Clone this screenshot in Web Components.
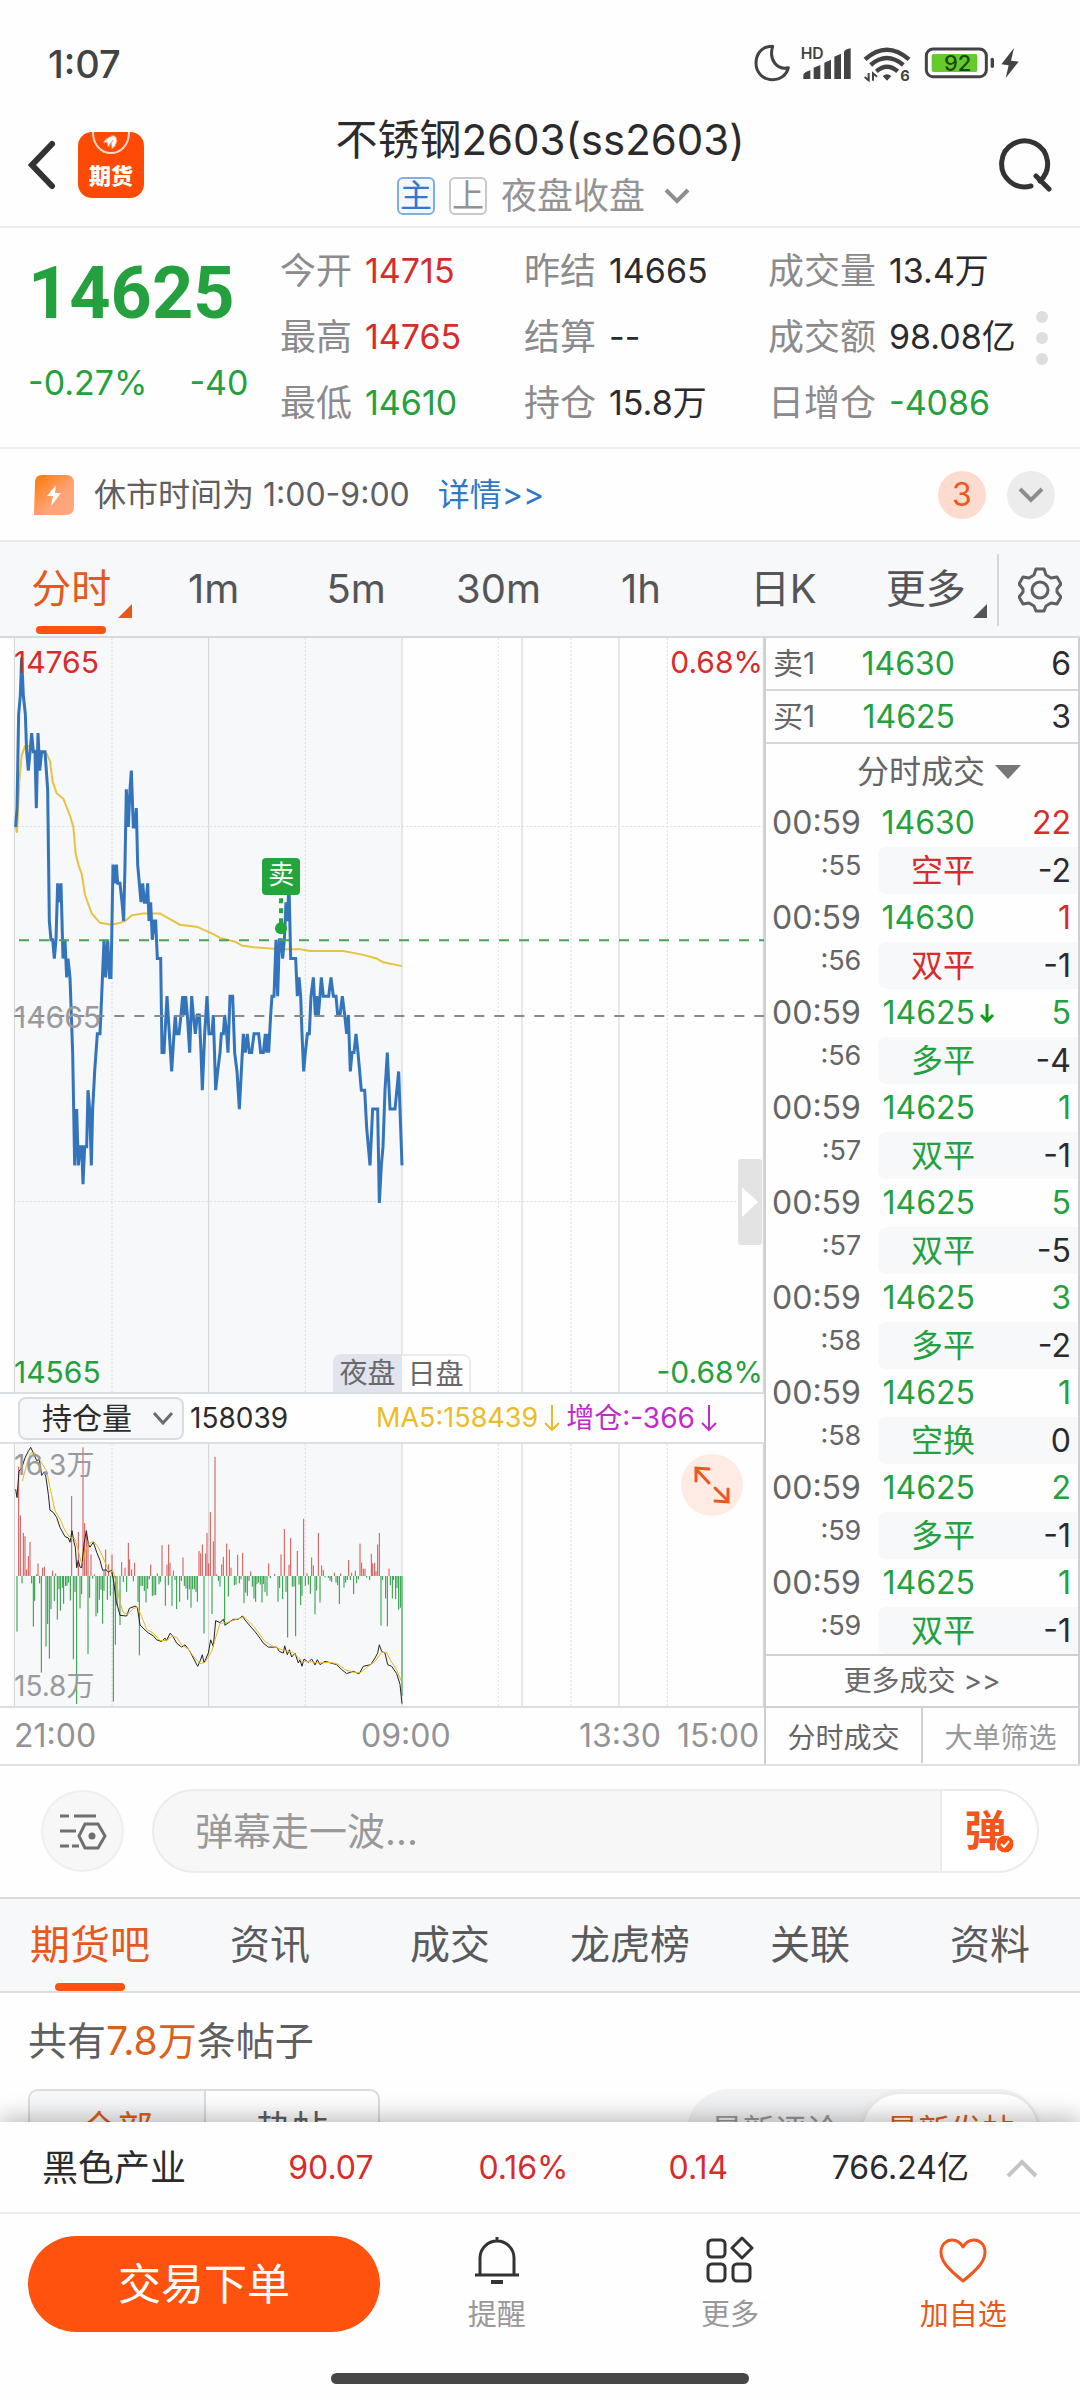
<!DOCTYPE html>
<html lang="zh-CN">
<head>
<meta charset="utf-8">
<meta name="viewport" content="width=device-width, initial-scale=1">
<title>不锈钢2603(ss2603)</title>
<style>
  :root {
    --up: #d82b2b;
    --down: #24a03e;
    --brand: #ff520e;
    --brand-text: #e8571b;
    --ink: #2b2b2d;
    --ink-2: #5f5f61;
    --ink-3: #8b8b8d;
    --line: #dcdcde;
    --panel: #f6f8fa;
  }

  body {
    margin: 0;
    background: #fefefe;
    color: var(--ink);
    font-family: Inter, "Noto Sans CJK SC", sans-serif;
  }
</style>
</head>
<body>

<futures-app>
  <status-bar slot="top"></status-bar>
  <page-header slot="top"></page-header>
  <quote-board></quote-board>
  <notice-bar></notice-bar>
  <period-tabs></period-tabs>
  <market-panel>
    <price-chart></price-chart>
    <position-chart></position-chart>
    <trade-tape slot="side"></trade-tape>
  </market-panel>
  <danmu-bar></danmu-bar>
  <section-tabs></section-tabs>
  <post-panel></post-panel>
  <bottom-dock slot="dock"></bottom-dock>
</futures-app>

<script>
const RESET = `
  :host, *, *::before, *::after { box-sizing: border-box; }
  button, input, select { font: inherit; color: inherit; margin: 0; padding: 0; border: 0; background: none; outline: none; }
  svg { display: block; fill: none; flex: none; }
  a { text-decoration: none; }
`;

function define(name, css, html) {
  customElements.define(name, class extends HTMLElement {
    connectedCallback() {
      if (this.shadowRoot) return;
      const root = this.attachShadow({ mode: "open" });
      const markup = typeof html === "function" ? html() : html;
      root.innerHTML = `<style>${RESET}${css}</style>${markup}`;
    }
  });
}

define("futures-app", `
  :host { display: flex; flex-direction: column; height: 100vh; overflow: hidden; }
  main { flex: 1; min-height: 0; overflow: hidden; }
`, `
  <slot name="top"></slot>
  <main><slot></slot></main>
  <slot name="dock"></slot>
`);

define("status-bar", `
  :host { display: flex; flex: none; align-items: center; justify-content: space-between; padding: 20px 40px 0 48px; height: 108px; }
  time { font-size: 38px; font-weight: 500; line-height: 48px; color: #434343; }
  text { font-family: Inter, sans-serif; fill: #434343; }
`, `
  <time>1:07</time>
  <svg width="300" height="70" viewBox="0 0 900 210">
    <path d="M98 52C60 52 48 80 48 103c0 29 22 49 50 49 24 0 42-14 47-36-32 8-60-22-47-64z" stroke="#434343" stroke-width="9" stroke-linejoin="round"/>
    <text x="182" y="91" font-size="47" font-weight="600">HD</text>
    <path fill="#434343" d="M190 137q2-7 21-13v26h-21zM221 116l20-8v42h-20zM253 101l20-9v58h-20zM283 83l20-9v76h-20zM312 68q4-7 20-10v92h-20z"/>
    <g stroke="#434343" stroke-width="13">
      <path d="M375 91q65-58 132 0M392 108q48-42 98 0M409 127q32-28 64 0"/>
    </g>
    <path d="M428 141q13-10 26 0l-13 14z" fill="#434343"/>
    <path d="M386 132v22l-12-10M399 155v-22l12 10" stroke="#434343" stroke-width="6"/>
    <text x="481" y="155" font-size="44" font-weight="700">6</text>
    <rect x="559" y="60" width="180" height="83" rx="20" stroke="#434343" stroke-width="9"/>
    <rect x="575" y="75" width="137" height="54" rx="6" fill="#66c92c"/>
    <text x="612" y="127" font-size="66" font-weight="500" style="fill:#1d4a08">92</text>
    <path d="M757 91v21" stroke="#434343" stroke-width="10" stroke-linecap="round"/>
    <path d="M822 57l-38 49 22 3-9 38 39-49-23-3z" fill="#434343"/>
  </svg>
`);

define("page-header", `
  :host { display: grid; flex: none; grid-template-columns: 1fr auto 1fr; align-items: center; height: 120px; padding: 4px 28px 8px; border-bottom: 2px solid #ececee; }
  .left { display: flex; align-items: center; gap: 22px; }
  .back, .find { display: flex; }
  .find { justify-self: end; }
  h1 { margin: 0; font-size: 42px; font-weight: 400; line-height: 52px; text-align: center; }
  .state { display: flex; align-items: center; justify-content: center; gap: 14px; margin-top: 10px; padding-left: 8px; height: 40px; font-size: 36px; line-height: 40px; color: #939395; }
  .tag { width: 38px; height: 38px; border: 2px solid #c9c9cb; border-radius: 6px; font-size: 32px; line-height: 33px; text-align: center; }
  .tag.main { border-color: #7fadea; color: #3377cf; background: #f3f8fe; }
  .state button { display: flex; align-items: center; gap: 18px; }
`, `
  <div class="left">
    <button class="back" aria-label="返回">
      <svg width="28" height="50" viewBox="0 0 28 50"><path d="M24 4L4 25l20 21" stroke="#333" stroke-width="6" stroke-linecap="round"/></svg>
    </button>
    <svg width="66" height="66" viewBox="0 0 66 66">
      <rect width="66" height="66" rx="14" fill="#ff4a05"/>
      <path d="M15 0c0 28 36 28 36 0" stroke="#ffd9c8" stroke-width="2"/>
      <path d="M26 9q12-11 13 0-1 5-5 8l-1-6-3 4-1-5-3 1zM35 8l-4 7" fill="#fff" stroke="#ff8a5c" stroke-width="1"/>
      <text x="33" y="52" text-anchor="middle" font-size="22" font-weight="900" fill="#fff" font-family="Noto Sans CJK SC, sans-serif">期货</text>
    </svg>
  </div>
  <div>
    <h1>不锈钢2603(ss2603)</h1>
    <div class="state">
      <span class="tag main">主</span><span class="tag">上</span>
      <button>夜盘收盘<svg width="28" height="20" viewBox="0 0 28 20"><path d="M3 4l11 11L25 4" stroke="#8d8d8f" stroke-width="4"/></svg></button>
    </div>
  </div>
  <button class="find" aria-label="搜索">
    <svg width="54" height="54" viewBox="0 0 54 54"><path d="M33 48A23 23 0 1 1 42 43M38 38l13 13" stroke="#333" stroke-width="5" stroke-linecap="round"/></svg>
  </button>
`);

define("quote-board", `
  :host { display: grid; grid-template-columns: 252fr 244fr 244fr 312fr; position: relative; height: 221px; padding: 10px 0 12px 28px; border-bottom: 2px solid #ececee; }
  .last { display: flex; flex-direction: column; gap: 21px; color: var(--down); }
  .price { margin-top: 18px; font-family: Roboto, sans-serif; font-size: 72px; font-weight: 700; line-height: 76px; }
  .change { display: flex; gap: 42px; font-size: 34px; line-height: 60px; }
  dl { margin: 0; }
  dl div { display: flex; align-items: center; gap: 13px; height: 66px; white-space: nowrap; }
  dt { font-size: 36px; line-height: 44px; color: var(--ink-3); }
  dd { margin: 0; font-size: 34px; line-height: 44px; }
  .up { color: var(--up); }
  .down { color: var(--down); }
  .more { position: absolute; right: 32px; top: 83px; display: grid; gap: 9px; }
  .more i { width: 12px; height: 12px; border-radius: 50%; background: #dedee0; }
`, () => {
  const columns = [
    [["今开", "14715", "up"], ["最高", "14765", "up"], ["最低", "14610", "down"]],
    [["昨结", "14665", ""], ["结算", "--", ""], ["持仓", "15.8万", ""]],
    [["成交量", "13.4万", ""], ["成交额", "98.08亿", ""], ["日增仓", "-4086", "down"]],
  ];
  return `
    <div class="last">
      <div class="price">14625</div>
      <div class="change"><span>-0.27%</span><span>-40</span></div>
    </div>
    ${columns.map(rows => `<dl>${rows.map(([k, v, c]) => `<div><dt>${k}</dt><dd class="${c}">${v}</dd></div>`).join("")}</dl>`).join("")}
    <button class="more" aria-label="更多行情"><i></i><i></i><i></i></button>`;
});

define("notice-bar", `
  :host { display: flex; align-items: center; height: 93px; padding: 0 25px 0 34px; font-size: 32px; line-height: 44px; color: var(--ink-2); border-bottom: 2px solid #e4e7ec; }
  .text { margin-left: 20px; }
  a { margin-left: 28px; color: #2f78c8; }
  .count { margin-left: auto; width: 48px; height: 48px; border-radius: 50%; background: #fddccf; color: #f0561d; line-height: 48px; text-align: center; }
  button { display: grid; place-items: center; width: 48px; height: 48px; margin-left: 21px; border-radius: 50%; background: #ececec; }
`, `
  <svg width="40" height="40" viewBox="0 0 40 40">
    <defs><linearGradient id="g" x1="0" y1="0" x2="1" y2="1"><stop stop-color="#ff7600"/><stop offset=".6" stop-color="#ffa477"/><stop offset="1" stop-color="#ffa880"/></linearGradient></defs>
    <path d="M8 0h24q8 0 8 8v24q0 8-8 8H0l1-32q0-8 7-8z" fill="url(#g)"/>
    <path d="M22 10l-9 11h6l-2 10 10-13h-6z" fill="#fff"/>
  </svg>
  <span class="text">休市时间为 1:00-9:00</span>
  <a href="#detail">详情&gt;&gt;</a>
  <span class="count">3</span>
  <button aria-label="展开"><svg width="28" height="18" viewBox="0 0 28 18"><path d="M3 3l11 11L25 3" stroke="#8d8d8f" stroke-width="4"/></svg></button>
`);

define("period-tabs", `
  :host { display: flex; height: 96px; background: var(--panel); border-bottom: 2px solid #d3d9df; color: #555557; font-size: 40px; }
  nav { display: flex; flex: 1; }
  nav button { position: relative; flex: 1 1 0; text-align: center; white-space: nowrap; line-height: 94px; }
  .on { color: var(--brand-text); }
  .on::before { content: ""; position: absolute; left: 50%; bottom: 2px; width: 70px; height: 8px; margin-left: -35px; border-radius: 4px; background: var(--brand); }
  .menu::after { content: ""; position: absolute; right: 10px; bottom: 18px; border: 7px solid; border-color: transparent currentColor currentColor transparent; }
  .gear { display: grid; place-items: center; width: 83px; margin: 12px 0 10px; border-left: 2px solid #d3d7dd; }
`, `
  <nav>
    <button class="on menu">分时</button><button>1m</button><button>5m</button><button>30m</button>
    <button>1h</button><button>日K</button><button class="menu">更多</button>
  </nav>
  <button class="gear" aria-label="设置">
    <svg width="44" height="46" viewBox="0 0 44 46" stroke="#606062" stroke-width="3" stroke-linejoin="round">
      <path d="M18 2h8l2 6 5 3 6-1 4 7-4 5v3l4 5-4 7-6-1-5 3-2 5h-8l-2-5-5-3-6 1-4-7 4-5v-3l-4-5 4-7 6 1 5-3z"/>
      <circle cx="22" cy="23" r="8"/>
    </svg>
  </button>
`);

define("market-panel", `
  :host { display: grid; grid-template-columns: 764fr 316fr; border-bottom: 2px solid #e0e0e2; }
  .charts { min-width: 0; }
`, `
  <div class="charts"><slot></slot></div>
  <slot name="side"></slot>
`);

// x runs in thirds of a unit over the whole trading day, y is ticks from the previous settlement
const PRICE = [
  47,10, 51,11, 56,16, 61,17, 65,19, 70,17, 76,16, 80,14, 85,13, 90,14, 95,15, 100,14, 105,14, 109,11, 114,15, 119,13, 125,14, 135,14,
  143,12, 148,5, 153,4, 158,4, 163,3, 168,4, 173,7, 177,6, 183,7, 189,3, 195,4, 200,2, 204,3, 210,2, 214,0, 218,-2, 224,-8, 230,-5,
  235,-8, 241,-7, 245,-7, 249,-9, 254,-7, 260,-7, 264,-4, 269,-5, 274,-8, 278,-5, 284,-3, 292,-1, 300,-1, 305,1, 312,4, 317,2, 323,4,
  329,2, 333,2, 339,8, 344,7, 349,8, 353,7, 360,7, 366,6, 371,5, 375,8, 379,12, 385,10, 390,12, 394,13, 400,10, 405,10, 409,11, 413,8,
  418,7, 423,6, 428,7, 433,6, 438,6, 443,7, 447,5, 452,6, 457,4, 463,5, 467,5, 472,3, 482,3, 486,-2, 492,-2, 501,1, 508,-1, 515,-3,
  522,-1, 526,0, 530,-1, 537,-1, 543,0, 548,1, 553,0, 557,1, 562,0, 569,-2, 575,1, 580,0, 586,-1, 592,0, 598,0, 603,-2, 607,-4,
  614,-1, 621,1, 627,-1, 636,-1, 640,0, 647,-4, 653,-3, 660,-2, 664,-1, 670,-1, 674,0, 680,-1, 684,-2, 690,1, 698,1, 704,-2, 711,-3,
  718,-5, 724,-3, 730,-1, 736,-2, 742,-1, 748,-2, 755,-2, 762,-1, 776,-1, 782,-2, 790,-2, 796,-1, 800,-2, 803,-1, 806,-2, 812,0,
  816,1, 822,1, 828,4, 833,1, 838,4, 843,4, 848,3, 853,4, 858,6, 862,5, 867,7, 872,3, 887,3, 892,1, 897,2, 902,1, 906,-1, 911,-3,
  916,-2, 922,-1, 928,-1, 933,1, 940,2, 946,0, 950,1, 955,0, 960,1, 964,2, 970,1, 986,1, 993,2, 1000,1, 1008,1, 1013,0, 1020,0,
  1027,1, 1034,0, 1040,-1, 1045,0, 1051,-3, 1056,-2, 1062,-2, 1068,-1, 1074,-2, 1084,-4, 1094,-4, 1100,-6, 1110,-8, 1118,-5,
  1133,-5, 1138,-10, 1144,-8, 1149,-7, 1155,-4, 1162,-2, 1170,-5, 1185,-5, 1196,-3, 1206,-8,
];
const AVERAGE = [
  47,10, 51,9.7, 58,12.4, 65,13.8, 75,14.3, 90,14.3, 100,14.1, 140,13.9, 150,13.5, 158,12.4, 170,11.8, 190,11.5, 210,10.6, 220,10,
  227,8.6, 235,8, 245,7.5, 255,6.4, 275,5.4, 300,4.9, 335,4.8, 360,4.9, 375,5, 395,5.3, 430,5.4, 480,5.4, 500,5.2, 540,4.8, 590,4.7,
  640,4.3, 660,4.1, 705,3.9, 725,3.7, 760,3.6, 840,3.5, 900,3.5, 930,3.4, 1030,3.4, 1090,3.2, 1130,3, 1150,2.8, 1206,2.6,
];
// position line and its MA5, y down from the top of the pane
const POSITION = [
  47,137, 51,162, 57,82, 65,72, 75,42, 85,22, 92,10, 100,27, 110,50, 118,47, 125,95, 133,84, 138,102, 145,152, 150,200, 160,207,
  170,222, 180,252, 195,280, 205,284, 210,297, 216,262, 222,297, 226,312, 230,374, 235,352, 240,372, 245,374, 252,302, 259,262,
  265,302, 270,312, 280,297, 290,327, 300,352, 308,382, 318,380, 325,387, 335,382, 342,422, 348,472, 360,518, 380,520, 388,497,
  405,490, 412,494, 420,547, 435,562, 445,571, 460,580, 470,592, 485,597, 495,587, 500,594, 510,572, 518,580, 530,602, 545,614,
  555,607, 570,627, 580,647, 593,672, 600,657, 607,637, 612,662, 625,632, 632,592, 640,612, 647,534, 660,540, 670,530, 676,547,
  690,537, 700,530, 715,530, 727,520, 735,532, 750,550, 765,567, 780,587, 790,602, 805,614, 830,614, 838,627, 850,632, 854,610,
  862,637, 868,622, 875,644, 885,632, 895,662, 900,652, 906,672, 912,650, 925,660, 935,650, 945,668, 952,652, 960,667, 975,657,
  1010,667, 1025,682, 1040,694, 1060,687, 1077,695, 1090,672, 1112,667, 1125,647, 1133,632, 1138,607, 1145,627, 1155,632,
  1163,667, 1175,672, 1190,694, 1200,727, 1206,785,
];
const POSITION_MA = [
  67,112, 80,62, 92,27, 105,27, 125,57, 140,82, 150,132, 165,202, 180,227, 195,262, 210,282, 225,287, 235,322, 243,357, 250,357,
  255,327, 265,302, 280,294, 295,312, 315,357, 325,382, 340,387, 350,422, 358,472, 370,510, 385,514, 400,497, 413,494, 425,522,
  440,560, 460,572, 480,594, 500,594, 515,582, 530,584, 545,607, 565,620, 580,642, 600,664, 615,660, 635,627, 648,582, 660,542,
  680,540, 710,530, 732,522, 760,550, 795,597, 820,612, 850,624, 880,630, 905,657, 930,658, 955,662, 990,660, 1015,666, 1035,682,
  1060,690, 1080,692, 1105,672, 1125,657, 1145,630, 1160,630, 1170,652, 1190,682, 1206,722,
];
const INFLOW = [
  56,330, 61,183, 70,130, 75,120, 80,20, 85,60, 90,103, 110,5, 114,38, 128,25, 133,28, 158,16, 167,8, 215,242, 235,133, 249,389,
  254,160, 259,130, 264,100, 273,65, 283,5, 312,15, 317,80, 326,35, 336,65, 365,42, 375,25, 385,100, 389,50, 395,20, 404,40,
  452,35, 472,8, 486,93, 501,35, 506,95, 510,40, 520,16, 549,56, 597,76, 602,68, 607,95, 617,68, 621,130, 626,38, 631,193, 640,105,
  645,360, 650,5, 665,35, 670,58, 680,98, 688,80, 693,25, 713,64, 728,70, 752,14, 806,38, 824,6, 843,65, 853,142, 867,34, 872,115,
  892,76, 911,173, 921,8, 935,56, 940,32, 955,130, 965,32, 970,18, 1003,10, 1022,8, 1046,48, 1055,10, 1066,16, 1080,98, 1085,40,
  1090,22, 1095,22, 1114,67, 1118,38, 1124,40, 1128,14, 1133,95, 1138,130, 1167,22,
];
const OUTFLOW = [
  51,168, 66,22, 95,22, 100,153, 104,75, 119,22, 124,292, 138,213, 143,145, 148,250, 153,100, 163,76, 172,132, 177,40, 181,105,
  187,36, 191,84, 197,30, 201,30, 206,20, 211,74, 220,252, 225,48, 230,387, 240,98, 245,55, 264,236, 269,66, 278,8, 288,122, 293,112,
  298,72, 303,42, 308,144, 312,45, 322,72, 331,60, 340,380, 346,208, 351,90, 360,148, 370,18, 380,48, 400,16, 414,78, 418,240,
  423,30, 428,30, 433,45, 438,80, 443,38, 448,10, 457,60, 462,58, 467,58, 477,25, 481,18, 496,90, 505,28, 516,90, 525,12, 530,100,
  539,78, 544,15, 553,30, 558,38, 563,72, 568,40, 573,96, 578,40, 583,40, 588,48, 592,78, 612,174, 636,115, 655,15, 660,32, 674,150,
  685,62, 703,28, 708,26, 718,22, 723,10, 732,82, 737,50, 742,60, 747,15, 757,32, 762,68, 767,78, 771,24, 776,20, 781,26, 786,80,
  790,24, 795,48, 801,60, 811,6, 834,78, 839,36, 848,70, 858,48, 863,186, 877,32, 882,32, 887,182, 897,26, 902,88, 906,60, 916,30,
  925,26, 931,54, 945,116, 950,44, 960,80, 975,4, 985,6, 990,14, 995,18, 1008,20, 1013,28, 1018,85, 1032,35, 1037,20, 1042,12,
  1051,12, 1061,55, 1070,22, 1075,10, 1100,5, 1109,12, 1143,150, 1148,12, 1157,68, 1162,152, 1171,28, 1177,68, 1181,12, 1187,70,
  1191,36, 1196,102, 1201,96, 1206,362,
];

function pairs(list, fn) {
  const out = [];
  for (let i = 0; i < list.length; i += 2) out.push(fn(list[i], list[i + 1]));
  return out.join(" ");
}

const vlines = (xs, h) => xs.map(x => `M${x} 0V${h}`).join("");

const grid = h => `
  <rect x="43" width="1163" height="${h}" fill="#f6f8fa"/>
  <path d="${vlines([43, 626, 1206, 1566, 1857, 2290], h)}" stroke="#d0d2d4" stroke-width="1"/>
  <path d="${vlines([336, 916, 1495, 1713, 2002], h)}" stroke="#dcdee0" stroke-width="1" stroke-dasharray="2 2"/>`;

define("price-chart", `
  :host { display: block; position: relative; height: 756px; border-bottom: 2px solid #dcdfe2; font-size: 30px; line-height: 40px; }
  svg.plot { width: 100%; height: 100%; }
  .plot * { vector-effect: non-scaling-stroke; }
  span, .handle, .mark { position: absolute; }
  .tl { left: 14px; top: 4px; color: var(--up); }
  .tr { right: 1px; top: 4px; color: var(--up); }
  .ml { left: 14px; top: 359px; color: #9a9a9c; }
  .bl { left: 14px; bottom: 0; color: var(--down); }
  .br { right: 1px; bottom: 0; color: var(--down); }
  .session { bottom: 0; display: flex; left: 43.6%; font-size: 28px; line-height: 38px; color: #69696b; text-align: center; }
  .session b { width: 69px; font-weight: 400; background: #e1e4ec; border-radius: 8px 0 0 0; }
  .session b + b { background: #fff; border: 2px solid #ececee; border-width: 2px 2px 0 0; border-radius: 0 8px 0 0; line-height: 36px; }
  .mark { left: 36.8%; top: 220px; width: 38px; height: 37px; margin-left: -19px; border-radius: 4px; background: #22a53c; color: #fff; font-size: 26px; line-height: 34px; text-align: center; }
  .handle { right: 2px; top: 521px; display: grid; place-items: center; width: 24px; height: 86px; border-radius: 3px; background: #e3e3e3; }
`, () => {
  const y = t => (378 - t * 18.85).toFixed(1);
  return `
    <svg class="plot" viewBox="0 0 2292 756" preserveAspectRatio="none">
      ${grid(756)}
      <path d="M43 189H2290M43 565H2290" stroke="#dcdee0" stroke-dasharray="2 2"/>
      <polyline points="${pairs(AVERAGE, (x, t) => `${x},${y(t)}`)}" stroke="#e9c33f" stroke-width="2"/>
      <polyline points="${pairs(PRICE, (x, t) => `${x},${y(t)}`)}" stroke="#3474bb" stroke-width="3"/>
      <path d="M57 303H2292" stroke="#46a552" stroke-width="2" stroke-dasharray="10 10"/>
      <path d="M43 379H2292" stroke="#8a8a8a" stroke-width="2" stroke-dasharray="10 10"/>
      <path d="M843 261V286" stroke="#22a53c" stroke-width="4" stroke-dasharray="5 5"/>
      <ellipse cx="843" cy="291" rx="18" ry="6" fill="#22a53c"/>
    </svg>
    <span class="tl">14765</span><span class="tr">0.68%</span>
    <span class="ml">14665</span>
    <span class="bl">14565</span><span class="br">-0.68%</span>
    <div class="mark">卖</div>
    <span class="session"><b>夜盘</b><b>日盘</b></span>
    <button class="handle" aria-label="收起盘口"><svg width="16" height="30" viewBox="0 0 16 30"><path d="M0 0l16 15L0 30z" fill="#fff"/></svg></button>`;
});

define("position-chart", `
  :host { display: block; font-size: 28px; }
  .bar { display: flex; align-items: center; height: 50px; padding-left: 18px; border-bottom: 2px solid #dcdfe2; line-height: 40px; white-space: nowrap; }
  label { position: relative; display: block; }
  select { appearance: none; width: 166px; height: 43px; padding: 0 50px 0 22px; border: 2px solid #d9dce3; border-radius: 8px; background: var(--panel); font-size: 30px; line-height: 38px; }
  label svg { position: absolute; right: 10px; top: 14px; }
  .value { margin-left: 6px; }
  .ma { margin-left: 88px; font-size: 27px; color: #e8bd28; }
  .diff { margin-left: 6px; color: #c02ccb; }
  .arrow { margin-left: 6px; }
  .pane { position: relative; height: 264px; border-bottom: 2px solid #dcdfe2; }
  .plot { width: 100%; height: 100%; }
  .plot * { vector-effect: non-scaling-stroke; }
  .pane span { position: absolute; left: 14px; line-height: 40px; color: #9a9a9c; }
  .hi { top: 1px; }
  .lo { bottom: 0; }
  .zoom { position: absolute; right: 21px; top: 10px; display: grid; place-items: center; width: 62px; height: 62px; border-radius: 50%; background: #feebe4; }
  .axis { display: grid; grid-template-columns: 347fr 218fr 98fr 87fr; padding-left: 14px; font-size: 32px; line-height: 56px; color: #939395; }
`, `
  <div class="bar">
    <label>
      <select aria-label="指标"><option>持仓量</option></select>
      <svg width="22" height="15" viewBox="0 0 22 15"><path d="M2 2l9 10 9-10" stroke="#6b6b6d" stroke-width="3"/></svg>
    </label>
    <span class="value">158039</span>
    <span class="ma">MA5:158439</span><svg class="arrow" width="16" height="28" viewBox="0 0 16 28"><path d="M8 1v25M1 19l7 7 7-7" stroke="#e8bd28" stroke-width="2"/></svg>
    <span class="diff">增仓:-366</span><svg class="arrow" width="16" height="28" viewBox="0 0 16 28"><path d="M8 1v25M1 19l7 7 7-7" stroke="#c02ccb" stroke-width="2"/></svg>
  </div>
  <div class="pane">
    <svg class="plot" viewBox="0 0 2292 792" preserveAspectRatio="none">
      ${grid(792)}
      <path d="${pairs(INFLOW, (x, v) => `M${x} 399V${399 - v}`)}" stroke="#d65050"/>
      <path d="${pairs(OUTFLOW, (x, v) => `M${x} 399V${399 + v}`)}" stroke="#22983a"/>
      <polyline points="${pairs(POSITION, (x, y) => `${x},${y}`)}" stroke="#222"/>
      <polyline points="${pairs(POSITION_MA, (x, y) => `${x},${y}`)}" stroke="#e6b820"/>
    </svg>
    <span class="hi">16.3万</span>
    <span class="lo">15.8万</span>
    <button class="zoom" aria-label="全屏"><svg width="38" height="38" viewBox="0 0 38 38"><path d="M16 17L3 3M3 15V2l13 1M22 22l13 13M35 23v13l-13-1" stroke="#f0561d" stroke-width="3" stroke-linecap="round"/></svg></button>
  </div>
  <div class="axis"><span>21:00</span><span>09:00</span><span>13:30</span><span>15:00</span></div>
`);

define("trade-tape", `
  :host { display: block; border: solid #cfcfd1; border-width: 0 2px; font-size: 32px; color: #656567; white-space: nowrap; }
  table { width: 100%; border-collapse: separate; border-spacing: 0; table-layout: fixed; }
  td { padding: 0; }
  .book td { height: 53px; border-bottom: 2px solid #d6d6d8; line-height: 51px; }
  .book td:first-child { padding-left: 7px; font-size: 30px; }
  .book td:nth-child(2) { padding-right: 20px; text-align: right; }
  td:last-child { padding-right: 7px; text-align: right; }
  .n { color: var(--ink); }
  .up { color: var(--up); }
  .down { color: var(--down); }
  .kind { display: flex; align-items: center; justify-content: center; gap: 10px; width: 100%; height: 55px; padding-left: 54px; padding-right: 20px; line-height: 50px; }
  .tape tr:nth-child(odd) td { height: 48px; line-height: 48px; }
  .tape tr:nth-child(even) td { height: 47px; line-height: 47px; }
  .tape td:first-child { padding-left: 6px; padding-right: 17px; }
  .tape td:nth-child(2) { position: relative; text-align: right; }
  .tape svg { position: absolute; left: 100%; top: 14px; margin-left: 4px; }
  .tape tr:nth-child(even) td:first-child { font-size: 27px; line-height: 38px; text-align: right; vertical-align: top; }
  .tape tr:nth-child(even) td:not(:first-child) { background: var(--panel); }
  .tape tr:nth-child(even) td:nth-child(2) { border-radius: 8px 0 0 8px; }
  .more { display: block; height: 54px; border: solid #d0d0d2; border-width: 2px 0; font-size: 28px; line-height: 50px; text-align: center; color: #69696b; }
  .tabs { display: flex; height: 55px; font-size: 28px; }
  .tabs button { flex: 1; text-align: center; }
  .tabs button + button { border-left: 2px solid #d0d0d2; color: #98989a; }
`, () => {
  const trades = [
    ["14630", "22", "up", ":55", "空平", "-2"],
    ["14630", "1", "up", ":56", "双平", "-1"],
    ["14625", "5", "down", ":56", "多平", "-4", true],
    ["14625", "1", "down", ":57", "双平", "-1"],
    ["14625", "5", "down", ":57", "双平", "-5"],
    ["14625", "3", "down", ":58", "多平", "-2"],
    ["14625", "1", "down", ":58", "空换", "0"],
    ["14625", "2", "down", ":59", "多平", "-1"],
    ["14625", "1", "down", ":59", "双平", "-1"],
  ];
  const arrow = `<svg width="16" height="20" viewBox="0 0 16 20"><path d="M8 1v17M2 12l6 6 6-6" stroke="#0f9a18" stroke-width="3"/></svg>`;
  return `
    <table class="book">
      <colgroup><col style="width:27%"><col style="width:40%"><col></colgroup>
      <tr><td>卖1</td><td class="down">14630</td><td class="n">6</td></tr>
      <tr><td>买1</td><td class="down">14625</td><td class="n">3</td></tr>
    </table>
    <button class="kind">分时成交<svg width="26" height="14" viewBox="0 0 26 14"><path d="M0 0h26L13 14z" fill="#77777a"/></svg></button>
    <table class="tape">
      <colgroup><col style="width:36%"><col style="width:31%"><col></colgroup>
      ${trades.map(([price, vol, cls, sec, type, diff, fell]) => `
        <tr><td>00:59</td><td class="down">${price}${fell ? arrow : ""}</td><td class="${cls}">${vol}</td></tr>
        <tr><td>${sec}</td><td class="${cls}">${type}</td><td class="n">${diff}</td></tr>`).join("")}
    </table>
    <a class="more" href="#trades">更多成交 &gt;&gt;</a>
    <div class="tabs"><button>分时成交</button><button>大单筛选</button></div>`;
});

define("danmu-bar", `
  :host { display: flex; align-items: center; gap: 28px; height: 131px; padding: 0 41px 2px; }
  .set { display: grid; place-items: center; flex: none; width: 83px; height: 82px; border: 2px solid #efefef; border-radius: 50%; background: #f7f7f7; }
  .field { display: flex; flex: 1; height: 84px; border: 2px solid #ebebeb; border-radius: 42px; background: #f7f7f7; overflow: hidden; }
  input { flex: 1; min-width: 0; padding: 0 41px; font-size: 38px; }
  input::placeholder { color: #99999b; opacity: 1; }
  .send { position: relative; width: 97px; padding-right: 8px; border-left: 2px solid #ebebeb; background: #fff; color: #f0561d; font-size: 42px; font-weight: 700; line-height: 76px; }
  .send svg { position: absolute; right: 22px; bottom: 17px; }
`, `
  <button class="set" aria-label="弹幕设置">
    <svg width="48" height="38" viewBox="0 0 48 38" stroke="#6f6f71" stroke-width="3">
      <path d="M1 4h9M15 4h22M1 19h16M1 34h9M13 34h7"/>
      <path d="M26 12h13l7 12-7 12H26l-6-12z"/><circle cx="33" cy="24" r="2" fill="#6f6f71"/>
    </svg>
  </button>
  <div class="field">
    <input type="text" aria-label="弹幕" placeholder="弹幕走一波...">
    <button class="send">弹<svg width="20" height="20" viewBox="0 0 20 20"><circle cx="10" cy="10" r="9" fill="#ff520e" stroke="#fff"/><path d="M6 10l3 3 5-6" stroke="#fff" stroke-width="2"/></svg></button>
  </div>
`);

define("section-tabs", `
  :host { display: flex; height: 96px; background: var(--panel); border: solid #dcdcde; border-width: 2px 0; color: #5a5a5c; font-size: 40px; }
  button { position: relative; flex: 1 1 0; line-height: 92px; white-space: nowrap; }
  .on { color: var(--brand-text); }
  .on::after { content: ""; position: absolute; left: 50%; bottom: 0; width: 70px; height: 8px; margin-left: -35px; border-radius: 4px; background: var(--brand); }
`, `
  <button class="on">期货吧</button><button>资讯</button><button>成交</button><button>龙虎榜</button><button>关联</button><button>资料</button>
`);

define("post-panel", `
  :host { display: block; padding: 20px 40px 0 28px; color: var(--ink-2); }
  p { margin: 0; font-size: 39px; line-height: 56px; }
  em { font-style: normal; color: #d9611c; }
  .filters { display: flex; justify-content: space-between; margin-top: 20px; }
  .scope { display: flex; height: 84px; border: 2px solid #d9dce0; border-radius: 10px; overflow: hidden; }
  .scope button { width: 174px; font-size: 36px; line-height: 76px; padding-bottom: 4px; }
  .scope button + button { border-left: 2px solid #d9dce0; }
  .scope .on { background: var(--panel); color: #d9611c; }
  .order { display: flex; width: 353px; height: 84px; padding: 5px 2px 5px 0; border-radius: 42px; background: #f1f2f4; }
  .order button { flex: 1; font-size: 32px; line-height: 72px; color: #98989a; }
  .order .on { border-radius: 37px; background: #fff; color: #d9611c; box-shadow: 0 0 8px rgba(0, 0, 0, 0.08); }
`, `
  <p>共有<em>7.8万</em>条帖子</p>
  <div class="filters">
    <div class="scope"><button class="on">全部</button><button>热帖</button></div>
    <div class="order"><button>最新评论</button><button class="on">最新发帖</button></div>
  </div>
`);

define("bottom-dock", `
  :host { display: block; position: relative; flex: none; height: 278px; background: #fefefe; box-shadow: 0 -4px 22px rgba(0, 0, 0, 0.28); }
  .sector { display: grid; grid-template-columns: 246fr 190fr 190fr 163fr 174fr 74fr; align-items: center; height: 92px; padding: 2px 0 0 42px; border-bottom: 2px solid #ececee; font-size: 32px; line-height: 44px; white-space: nowrap; }
  .sector b { font-size: 36px; font-weight: 400; }
  .up { color: var(--up); }
  .actions { display: flex; padding-top: 22px; }
  .order { flex: none; width: 352px; height: 96px; margin-left: 28px; border-radius: 48px; background: var(--brand); color: #fff; font-size: 43px; line-height: 90px; }
  nav { display: flex; flex: 1; }
  nav button { display: flex; flex: 1; flex-direction: column; align-items: center; gap: 12px; font-size: 29px; line-height: 38px; color: #98989a; }
  nav .fav { color: var(--brand-text); }
  .home { width: 418px; height: 11px; margin: 39px auto 0; border-radius: 6px; background: #464646; }
`, `
  <div class="sector">
    <b>黑色产业</b><span class="up">90.07</span><span class="up">0.16%</span><span class="up">0.14</span><span>766.24亿</span>
    <svg width="32" height="20" viewBox="0 0 32 20"><path d="M2 18L16 4l14 14" stroke="#c4c4c6" stroke-width="4"/></svg>
  </div>
  <div class="actions">
    <button class="order">交易下单</button>
    <nav>
      <button>
        <svg width="48" height="48" viewBox="0 0 48 48" stroke="#333" stroke-width="3"><path d="M24 1v5M7 39V22a17 17 0 0 1 34 0v17M2 39h44"/><path d="M18 46h12" stroke-width="4"/></svg>
        提醒
      </button>
      <button>
        <svg width="48" height="48" viewBox="0 0 48 48" stroke="#333" stroke-width="3"><rect x="2" y="4" width="17" height="17" rx="4"/><rect x="2" y="28" width="17" height="17" rx="4"/><rect x="27" y="28" width="17" height="17" rx="4"/><path d="M36 2l10 10-10 10-10-10z" stroke-linejoin="round"/></svg>
        更多
      </button>
      <button class="fav">
        <svg width="48" height="48" viewBox="0 0 48 48" stroke="#f0561d" stroke-width="3"><path d="M24 45C8 32 2 25 2 16 2 8 8 4 13 4q7 0 11 7 4-7 11-7c5 0 11 4 11 12 0 9-6 16-22 29z" stroke-linejoin="round"/></svg>
        加自选
      </button>
    </nav>
  </div>
  <div class="home"></div>
`);
</script>
</body>
</html>
